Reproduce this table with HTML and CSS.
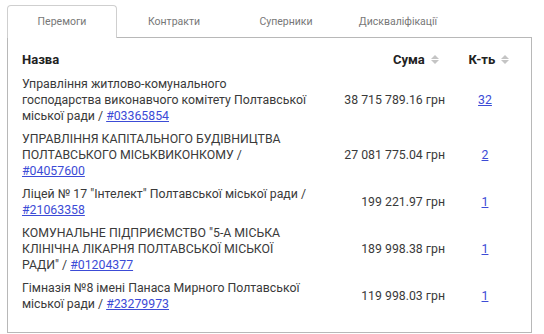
FILE: index.html
```html
<!DOCTYPE html>
<html lang="uk">
<head>
<meta charset="utf-8">
<link rel="stylesheet" href="styles.css">
</head>
<body>
<div class="widget">
  <ul class="tabs">
    <li class="tab active">Перемоги</li>
    <li class="tab">Контракти</li>
    <li class="tab">Суперники</li>
    <li class="tab">Дискваліфікації</li>
  </ul>
  <div class="panel">
    <table class="wins">
      <colgroup>
        <col class="c-name"><col class="c-sum"><col class="c-count">
      </colgroup>
      <thead>
        <tr>
          <th class="name">Назва</th>
          <th class="sum">Сума <span class="sort"><i class="up"></i><i class="down"></i></span></th>
          <th class="count">К-ть <span class="sort"><i class="up"></i><i class="down"></i></span></th>
        </tr>
      </thead>
      <tbody>
        <tr>
          <td class="name">Управління житлово-комунального<br>господарства виконавчого комітету Полтавської<br>міської ради / <a href="#">#03365854</a></td>
          <td class="sum">38 715 789.16 грн</td>
          <td class="count"><a href="#">32</a></td>
        </tr>
        <tr>
          <td class="name">УПРАВЛІННЯ КАПІТАЛЬНОГО БУДІВНИЦТВА<br>ПОЛТАВСЬКОГО МІСЬКВИКОНКОМУ /<br><a href="#">#04057600</a></td>
          <td class="sum">27 081 775.04 грн</td>
          <td class="count"><a href="#">2</a></td>
        </tr>
        <tr>
          <td class="name">Ліцей № 17 "Інтелект" Полтавської міської ради /<br><a href="#">#21063358</a></td>
          <td class="sum">199 221.97 грн</td>
          <td class="count"><a href="#">1</a></td>
        </tr>
        <tr>
          <td class="name">КОМУНАЛЬНЕ ПІДПРИЄМСТВО "5-А МІСЬКА<br>КЛІНІЧНА ЛІКАРНЯ ПОЛТАВСЬКОЇ МІСЬКОЇ<br>РАДИ" / <a href="#">#01204377</a></td>
          <td class="sum">189 998.38 грн</td>
          <td class="count"><a href="#">1</a></td>
        </tr>
        <tr>
          <td class="name">Гімназія №8 імені Панаса Мирного Полтавської<br>міської ради / <a href="#">#23279973</a></td>
          <td class="sum">119 998.03 грн</td>
          <td class="count"><a href="#">1</a></td>
        </tr>
      </tbody>
    </table>
  </div>
</div>
</body>
</html>
```
FILE: styles.css
```css
* { box-sizing: border-box; }
html, body { margin: 0; padding: 0; background: #fff; }
body {
  font-family: Roboto, "Noto Sans", sans-serif;
  color: #3a3a3a;
  padding: 5px 0 0 7px;
}
.widget { width: 525px; }
.tabs {
  list-style: none;
  margin: 0;
  padding: 0;
  display: flex;
  gap: 2px;
  font-size: 10.5px;
  color: #777;
  border-bottom: 1px solid #b8b8b8;
}
.tab {
  width: 110px;
  text-align: center;
  padding: 9px 0 9px;
  line-height: 13px;
  border: 1px solid transparent;
  border-bottom: none;
}
.tab.active {
  border-color: #cfcfcf;
  border-radius: 4px 4px 0 0;
  background: #fff;
  margin-bottom: -1px;
  padding-bottom: 10px;
}
.panel {
  border: 1px solid #b8b8b8;
  border-top: none;
  padding: 7px 14px 16px 14px;
}
.wins {
  width: 100%;
  border-collapse: collapse;
  table-layout: fixed;
  font-size: 12.3px;
  line-height: 16px;
}
.c-name { width: 300px; }
.c-sum { width: 123px; }
.wins th {
  font-weight: 700;
  color: #222;
  font-size: 13px;
  padding: 7px 0 5px;
  text-align: left;
}
.wins th.sum { text-align: right; padding-right: 6px; }
.wins th.count { text-align: center; padding-left: 16px; }
.wins td { padding: 3px 0 4px; vertical-align: middle; }
.wins td.name { white-space: nowrap; }
.wins td.sum { text-align: right; }
.wins td.count { text-align: center; padding-left: 8px; }
.wins a { color: #3c4bd6; text-decoration: underline; }
.sort {
  display: inline-flex;
  flex-direction: column;
  gap: 1px;
  vertical-align: middle;
  margin-left: 3px;
  margin-top: -2px;
}
.sort i {
  display: block;
  width: 0; height: 0;
  border-left: 4px solid transparent;
  border-right: 4px solid transparent;
}
.sort .up { border-bottom: 4px solid #c4c4c4; }
.sort .down { border-top: 4px solid #c4c4c4; }
```
